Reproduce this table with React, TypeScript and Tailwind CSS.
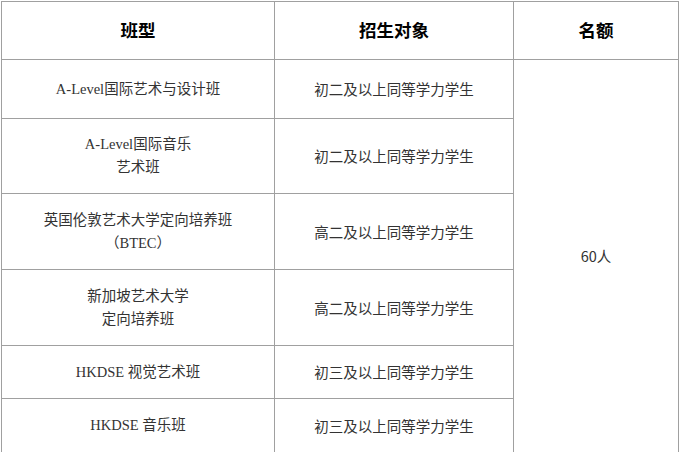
import React from 'react';

type Row = {
  lines: string[];
  target: string;
  h: number;
};

const rows: Row[] = [
  { lines: ['A-Level国际艺术与设计班'], target: '初二及以上同等学力学生', h: 59 },
  { lines: ['A-Level国际音乐', '艺术班'], target: '初二及以上同等学力学生', h: 75 },
  { lines: ['英国伦敦艺术大学定向培养班', '（BTEC）'], target: '高二及以上同等学力学生', h: 76 },
  { lines: ['新加坡艺术大学', '定向培养班'], target: '高二及以上同等学力学生', h: 76 },
  { lines: ['HKDSE 视觉艺术班'], target: '初三及以上同等学力学生', h: 53 },
  { lines: ['HKDSE 音乐班'], target: '初三及以上同等学力学生', h: 54 },
];

const cjk = "font-['Noto_Sans_CJK_SC',sans-serif]";
const serif = "font-['Liberation_Serif','Noto_Sans_CJK_SC',serif]";

export default function App() {
  return (
    <div className="min-h-screen bg-white pt-px pl-px">
      <table className="w-[677px] table-fixed border-collapse text-[#333]">
        <colgroup>
          <col className="w-[273px]" />
          <col className="w-[239px]" />
          <col className="w-[165px]" />
        </colgroup>
        <thead>
          <tr className="h-[58px]">
            {['班型', '招生对象', '名额'].map((t) => (
              <th
                key={t}
                className={`border border-[#a0a0a0] p-0 text-center align-middle text-[17.5px] font-bold text-black ${cjk}`}
              >
                {t}
              </th>
            ))}
          </tr>
        </thead>
        <tbody>
          {rows.map((r, i) => (
            <tr key={i} style={{ height: r.h }}>
              <td className={`border border-[#a0a0a0] p-0 text-center align-middle text-[14.5px] leading-[23px] ${serif}`}>
                {r.lines.map((l) => (
                  <div key={l}>{l}</div>
                ))}
              </td>
              <td className={`border border-[#a0a0a0] p-0 text-center align-middle text-[14.5px] ${cjk}`}>
                {r.target}
              </td>
              {i === 0 && (
                <td
                  rowSpan={rows.length}
                  className="border border-[#a0a0a0] p-0 text-center align-middle text-[14.5px] font-['Noto_Sans_CJK_SC',sans-serif]"
                >
                  60人
                </td>
              )}
            </tr>
          ))}
        </tbody>
      </table>
    </div>
  );
}
